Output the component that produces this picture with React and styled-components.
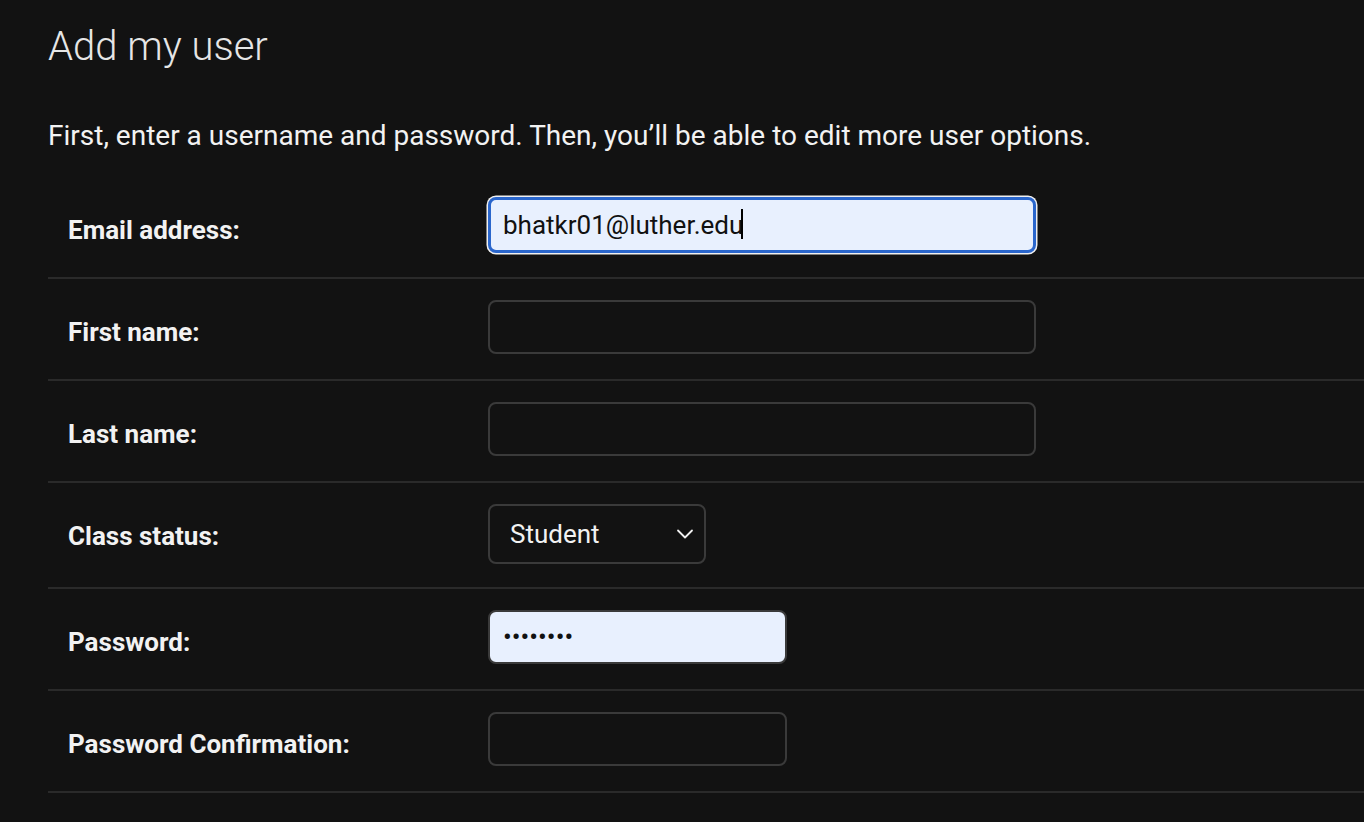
import React from "react";
import styled, { createGlobalStyle } from "styled-components";

const GlobalStyle = createGlobalStyle`
  html, body {
    margin: 0;
    padding: 0;
    background: #121212;
  }
  body {
    font-family: Roboto, "Noto Sans", "Liberation Sans", sans-serif;
    color: #f5f5f5;
  }
`;

const Page = styled.div`
  min-height: 822px;
  background: #121212;
  padding: 20px 0 0 48px;
  box-sizing: border-box;
  overflow: hidden;
`;

const Title = styled.h1`
  margin: 0;
  font-size: 40px;
  font-weight: 300;
  line-height: 54px;
  color: #e6e6e6;
`;

const Intro = styled.p`
  margin: 46px 0 25px;
  font-size: 28px;
  line-height: 32px;
  color: #f2f2f2;
`;

const Row = styled.div`
  display: flex;
  align-items: center;
  min-height: ${(p) => p.$h || 102}px;
  box-sizing: border-box;
  padding: 0 0 4px 20px;
  border-bottom: 2px solid #2a2a2a;
`;

const Label = styled.label`
  width: 420px;
  flex-shrink: 0;
  font-size: 26px;
  font-weight: 700;
  color: #f2f2f2;
  padding-top: ${(p) => p.$top || 10}px;
`;

const FieldWrap = styled.div`
  position: relative;
  display: flex;
`;

const Input = styled.input`
  box-sizing: border-box;
  width: ${(p) => p.$w}px;
  height: ${(p) => (p.$focus ? 56 : 54)}px;
  padding: 0 ${(p) => (p.$focus ? 12 : 13)}px;
  border-radius: 8px;
  font-family: inherit;
  font-size: 26px;
  color: #111;
  background: ${(p) => (p.$filled ? "#e8f0fe" : "#121212")};
  border: ${(p) => (p.$focus ? "3px solid #2a66cc" : "2px solid #3a3a3a")};
  box-shadow: ${(p) => (p.$focus ? "0 0 0 1.5px #f0f0f0" : "none")};
  outline: none;
`;

const Caret = styled.span`
  position: absolute;
  left: 253px;
  top: 12px;
  width: 2px;
  height: 30px;
  background: #000;
`;

const SelectBox = styled.div`
  box-sizing: border-box;
  width: 218px;
  height: 60px;
  margin-top: 2px;
  border: 2px solid #3a3a3a;
  border-radius: 8px;
  display: flex;
  align-items: center;
  justify-content: space-between;
  padding: 0 10px 0 20px;
  font-size: 26px;
  color: #f2f2f2;
`;

const Chevron = () => (
  <svg width="18" height="18" viewBox="0 0 18 18" fill="none">
    <path d="M2 5.5 L9 12.5 L16 5.5" stroke="#f0f0f0" strokeWidth="1.8" strokeLinecap="round" strokeLinejoin="round" />
  </svg>
);

export default function App() {
  return (
    <Page>
      <GlobalStyle />
      <Title>Add my user</Title>
      <Intro>First, enter a username and password. Then, you’ll be able to edit more user options.</Intro>
      <Row>
        <Label>Email address:</Label>
        <FieldWrap>
          <Input $w={548} $filled $focus readOnly value="bhatkr01@luther.edu" />
          <Caret />
        </FieldWrap>
      </Row>
      <Row>
        <Label>First name:</Label>
        <Input $w={548} readOnly value="" />
      </Row>
      <Row>
        <Label>Last name:</Label>
        <Input $w={548} readOnly value="" />
      </Row>
      <Row $h={106}>
        <Label $top={6}>Class status:</Label>
        <SelectBox>
          <span>Student</span>
          <Chevron />
        </SelectBox>
      </Row>
      <Row>
        <Label>Password:</Label>
        <Input $w={299} $filled type="password" readOnly value="password" />
      </Row>
      <Row>
        <Label>Password Confirmation:</Label>
        <Input $w={299} type="password" readOnly value="" />
      </Row>
    </Page>
  );
}
